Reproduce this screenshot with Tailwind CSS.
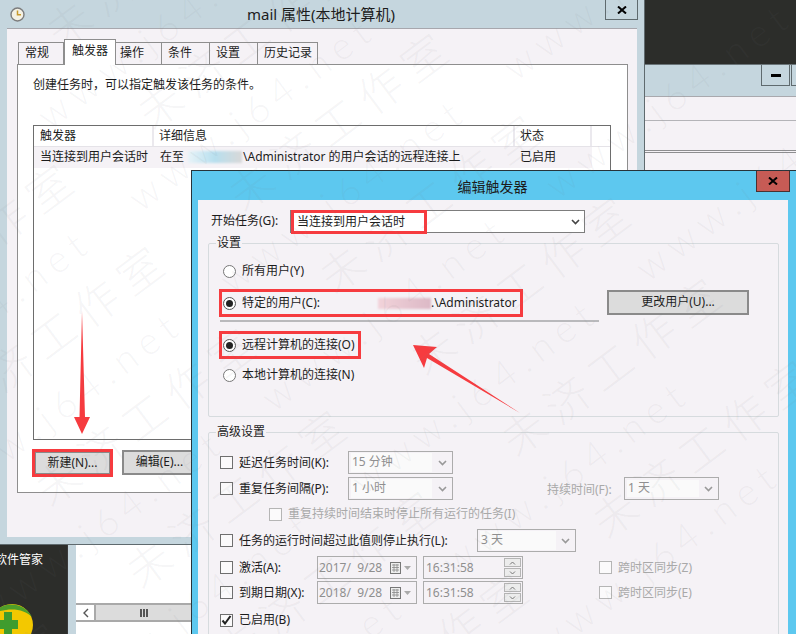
<!DOCTYPE html>
<html lang="zh-CN">
<head>
<meta charset="utf-8">
<script src="https://cdn.jsdelivr.net/npm/@tailwindcss/browser@4"></script>
</head>
<body class="m-0">
<div class="relative w-[796px] h-[634px] overflow-hidden bg-[#c5d6de] text-[12px] leading-[16px] text-[#1c1c1c] font-['Noto_Sans','Noto_Sans_CJK_SC',sans-serif]">

  <!-- other windows at right -->
  <div class="absolute left-[645px] top-0 w-[151px] h-[170px] flex flex-col">
    <div class="h-[65px] bg-[#2c2d2a] border-b border-[#6a7478]"></div>
    <div class="h-[31px] flex items-start justify-end pl-[116px] gap-[1px]">
      <div class="w-[29px] h-[21px] border border-t-0 border-[#5f6a6e] flex items-center justify-center"><div class="w-[10px] h-[3px] bg-black"></div></div>
      <div class="flex-1 h-[21px] border-l border-b border-[#5f6a6e]"></div>
    </div>
    <div class="h-[24px] bg-[#f5f2f6] border-t border-[#a9a9ae]"></div>
    <div class="h-[30px] bg-[#f5f2f6] border-t border-[#b4b4b8]"></div>
    <div class="flex-1 bg-[#f5f2f6] border-t-[3px] border-double border-[#8e8e90]"></div>
  </div>

  <!-- lower-left windows -->
  <div class="absolute left-0 top-[544px] w-[192px] h-[90px] flex border-t border-[#5f6a6e]">
    <div class="relative w-[68px] bg-[#2c2d2a] text-white overflow-hidden border-r border-[#3a3a3a]">
      <div class="ml-[-5px] mt-[7px] whitespace-nowrap">软件管家</div>
      <svg class="absolute left-0 top-[58px]" width="40" height="32" viewBox="0 0 40 32">
        <circle cx="12" cy="22" r="21" fill="#f3c800"/>
        <path d="M-6 10 C2 -2 24 -2 32 14 C24 6 10 4 -6 10Z" fill="#4f9f2a"/>
        <path d="M4 9h8v8h6v9h-6v8h-8v-8h-6v-9h6z" fill="#3f9c2e"/>
      </svg>
    </div>
    <div class="w-[8px] bg-[#c5d6de]"></div>
    <div class="flex-1 bg-white flex flex-col">
      <div class="h-[58px]"></div>
      <div class="h-[19px] flex items-stretch border-t-2 border-b-2 border-[#a9a9a9]">
        <div class="w-[18px] flex items-center justify-center">
          <svg width="7" height="10" viewBox="0 0 7 10"><path d="M6 1L2 5l4 4" fill="none" stroke="#555" stroke-width="1.4"/></svg>
        </div>
        <div class="flex-1 bg-[#dcdcdc] border-l-2 border-[#a9a9a9] flex items-center justify-center gap-[1px]">
          <i class="w-[2px] h-[8px] bg-[#555]"></i><i class="w-[2px] h-[8px] bg-[#555]"></i><i class="w-[2px] h-[8px] bg-[#555]"></i>
        </div>
      </div>
    </div>
  </div>

  <!-- mail properties window -->
  <div class="absolute left-0 top-0 w-[645px] h-[545px] bg-[#c5d6de] border-r border-b border-[#5f6a6e] flex flex-col">
    <div class="relative h-[28px] flex items-center justify-center shrink-0">
      <svg class="absolute left-[10px] top-[7px]" width="15" height="15" viewBox="0 0 15 15">
        <circle cx="7.5" cy="7.5" r="6.5" fill="#f4f1e4" stroke="#7d7d7d" stroke-width="1.4"/>
        <path d="M7.5 3.5v4.2h3.5" fill="none" stroke="#c79a2c" stroke-width="1.5"/>
      </svg>
      <span class="text-[15px] leading-[20px] ml-[-2px] mt-[-1px]">mail 属性(本地计算机)</span>
      <div class="absolute left-[605px] top-0 w-[33px] h-[20px] border border-t-0 border-[#5f6a6e] flex items-center justify-center">
        <svg width="10" height="8" viewBox="0 0 10 8"><path d="M1 0.5L9 7.5M9 0.5L1 7.5" stroke="#000" stroke-width="2"/></svg>
      </div>
    </div>
    <div class="ml-[7px] w-[630px] h-[509px] bg-[#f5f2f6] border-t border-[#a7a7ad] pl-[10px] pt-[10px]">
      <div class="flex items-end h-[25px] pl-[1px] relative z-10">
        <div class="w-[46px] h-[22px] border border-b-0 border-[#8e8e8e] pl-[6px] leading-[20px]">常规</div>
        <div class="w-[52px] h-[26px] mb-[-1px] bg-white border border-b-0 border-[#8e8e8e] pl-[7px] leading-[22px]">触发器</div>
        <div class="w-[46px] h-[22px] border border-b-0 border-l-0 border-[#8e8e8e] pl-[4px] leading-[20px]">操作</div>
        <div class="w-[48px] h-[22px] border border-b-0 border-l-0 border-[#8e8e8e] pl-[6px] leading-[20px]">条件</div>
        <div class="w-[48px] h-[22px] border border-b-0 border-l-0 border-[#8e8e8e] pl-[6px] leading-[20px]">设置</div>
        <div class="w-[60px] h-[22px] border border-b-0 border-l-0 border-[#8e8e8e] pl-[6px] leading-[20px]">历史记录</div>
      </div>
      <div class="w-[611px] h-[429px] bg-white border border-[#8e8e8e] pl-[15px] pt-[12px]">
        <div class="text-[#1c1c1c]">创建任务时，可以指定触发该任务的条件。</div>
        <div class="mt-[32px] w-[578px] h-[315px] border border-[#6d6d6d]">
          <div class="flex h-[21px] border-b border-[#e5e3e8] leading-[20px]">
            <div class="w-[120px] pl-[6px] border-r-2 border-[#ebe9ee]">触发器</div>
            <div class="w-[361px] pl-[5px] border-r-2 border-[#ebe9ee]">详细信息</div>
            <div class="w-[77px] pl-[5px] border-r-2 border-[#ebe9ee]">状态</div>
          </div>
          <div class="flex h-[21px] w-[558px] bg-[#f5f2f6] leading-[19px]">
            <div class="w-[120px] pl-[6px]">当连接到用户会话时</div>
            <div class="w-[361px] pl-[6px] flex whitespace-nowrap">在至<span class="w-[54px] h-[12px] mt-[4px] ml-[4px] bg-gradient-to-r from-[#e8f3f8] via-[#b7dfee] to-[#d8d8d8] blur-[1px]"></span><span class="ml-[1px]">\Administrator 的用户会话的远程连接上</span></div>
            <div class="w-[77px] pl-[5px]">已启用</div>
          </div>
        </div>
        <div class="flex mt-[9px] items-start">
          <div class="w-[81px] h-[28px] border-[3px] border-[#f63b3f] ml-[-1px]">
            <div class="h-full bg-[#dcdcdc] border border-[#8a8a8a] text-center leading-[19px]">新建(N)...</div>
          </div>
          <div class="w-[75px] h-[25px] ml-[9px] mt-[1px] bg-[#dcdcdc] border-2 border-[#8a8a8a] text-center leading-[20px]">编辑(E)...</div>
        </div>
      </div>
    </div>
  </div>

  <!-- edit trigger dialog -->
  <div class="absolute left-[191px] top-[170px] w-[606px] h-[464px] bg-[#5dc8ef] border-t border-l border-[#27343a] flex flex-col">
    <div class="relative h-[29px] shrink-0 flex items-center justify-center">
      <span class="text-[14px] ml-[-4px] mt-[2px]">编辑触发器</span>
      <div class="absolute left-[564px] top-0 w-[34px] h-[21px] bg-[#c75b55] border border-t-0 border-[#4a3030] flex items-center justify-center">
        <svg width="10" height="8" viewBox="0 0 10 8"><path d="M1 0.5L9 7.5M9 0.5L1 7.5" stroke="#000" stroke-width="2"/></svg>
      </div>
    </div>
    <div class="ml-[6px] w-[590px] flex-1 bg-[#f5f2f6] pl-[10px]">
      <!-- start task -->
      <div class="flex items-start mt-[10px] h-[23px]">
        <div class="w-[82px] pl-[3px] mt-[3px]">开始任务(G):</div>
        <div class="relative w-[295px] h-[23px] bg-white border border-[#7d7d7d] flex items-center justify-end pr-[4px]">
          <svg width="9" height="6" viewBox="0 0 9 6"><path d="M1 1l3.5 3.5L8 1" fill="none" stroke="#444" stroke-width="1.6"/></svg>
          <div class="absolute left-0 top-[-1px] w-[136px] h-[24px] border-[3px] border-[#f63b3f] pl-[3px] leading-[16px] pt-[1px]">当连接到用户会话时</div>
        </div>
      </div>
      <!-- settings group -->
      <fieldset class="mt-[2px] w-[571px] h-[182px] border border-[#d6dbde] rounded-[2px] pl-[10px] min-w-0">
        <legend class="ml-[-3px] px-[1px] leading-[16px]">设置</legend>
        <div class="flex items-center h-[20px] mt-[10px] ml-[4px]">
          <span class="w-[13px] h-[13px] rounded-full border border-[#777] bg-white"></span>
          <span class="ml-[6px]">所有用户(Y)</span>
        </div>
        <div class="flex items-start mt-[8px]">
          <div class="w-[304px] h-[28px] border-[3px] border-[#f63b3f] flex items-center pl-[1px] whitespace-nowrap">
            <span class="w-[13px] h-[13px] rounded-full border border-[#555] bg-white flex items-center justify-center"><i class="w-[7px] h-[7px] rounded-full bg-[#222]"></i></span>
            <span class="ml-[6px] w-[136px]">特定的用户(C):</span>
            <span class="w-[53px] h-[11px] bg-gradient-to-r from-[#f2d3da] to-[#dcb9c6] blur-[1px]"></span>
            <span>.\Administrator</span>
          </div>
          <div class="w-[142px] h-[25px] ml-[84px] mt-[1px] bg-[#dcdcdc] border-2 border-[#8a8a8a] text-center leading-[20px]">更改用户(U)...</div>
        </div>
        <div class="w-[379px] h-[2px] bg-[#b9b9bc] ml-[1px] mt-[3px]"></div>
        <div class="w-[142px] h-[28px] mt-[9px] border-[3px] border-[#f63b3f] flex items-center pl-[1px] whitespace-nowrap">
          <span class="w-[13px] h-[13px] rounded-full border border-[#555] bg-white flex items-center justify-center"><i class="w-[7px] h-[7px] rounded-full bg-[#222]"></i></span>
          <span class="ml-[6px]">远程计算机的连接(O)</span>
        </div>
        <div class="flex items-center h-[20px] mt-[6px] ml-[4px]">
          <span class="w-[13px] h-[13px] rounded-full border border-[#777] bg-white"></span>
          <span class="ml-[6px]">本地计算机的连接(N)</span>
        </div>
      </fieldset>
      <!-- advanced group -->
      <fieldset class="mt-[7px] w-[571px] h-[260px] border border-[#d6dbde] rounded-[2px] pl-[11px] min-w-0">
        <legend class="ml-[-4px] px-[1px] leading-[16px]">高级设置</legend>
        <div class="flex items-center h-[23px] mt-[11px]">
          <span class="w-[13px] h-[13px] border border-[#6f6f6f] bg-[#fbfafb]"></span>
          <span class="ml-[6px] w-[109px]">延迟任务时间(K):</span>
          <div class="w-[105px] h-[23px] border border-[#acacac] flex items-center pl-[2px] pr-[5px] text-[#8f8f8f]"><span class="w-[81px] h-[19px] bg-[#fafafa] pl-[1px] leading-[18px]">15 分钟</span><svg class="ml-auto" width="9" height="6" viewBox="0 0 9 6"><path d="M1 1l3.5 3.5L8 1" fill="none" stroke="#999" stroke-width="1.6"/></svg></div>
        </div>
        <div class="flex items-center h-[23px] mt-[3px]">
          <span class="w-[13px] h-[13px] border border-[#6f6f6f] bg-[#fbfafb]"></span>
          <span class="ml-[6px] w-[109px]">重复任务间隔(P):</span>
          <div class="w-[105px] h-[23px] border border-[#acacac] flex items-center pl-[2px] pr-[5px] text-[#8f8f8f]"><span class="w-[81px] h-[19px] bg-[#fafafa] pl-[1px] leading-[18px]">1 小时</span><svg class="ml-auto" width="9" height="6" viewBox="0 0 9 6"><path d="M1 1l3.5 3.5L8 1" fill="none" stroke="#999" stroke-width="1.6"/></svg></div>
          <span class="ml-[94px] w-[77px] text-[#a9a9a9] mt-[2px]">持续时间(F):</span>
          <div class="w-[95px] h-[23px] border border-[#acacac] flex items-center pl-[2px] pr-[5px] text-[#8f8f8f]"><span class="w-[72px] h-[17px] bg-[#fafafa] pl-[1px] leading-[15px]">1 天</span><svg class="ml-auto" width="9" height="6" viewBox="0 0 9 6"><path d="M1 1l3.5 3.5L8 1" fill="none" stroke="#999" stroke-width="1.6"/></svg></div>
        </div>
        <div class="flex items-center h-[18px] mt-[5px] pl-[49px] text-[#a9a9a9]">
          <span class="w-[13px] h-[13px] border border-[#b5b5b5] bg-[#fbfafb]"></span>
          <span class="ml-[6px]">重复持续时间结束时停止所有运行的任务(I)</span>
        </div>
        <div class="flex items-center h-[23px] mt-[6px]">
          <span class="w-[13px] h-[13px] border border-[#6f6f6f] bg-[#fbfafb]"></span>
          <span class="ml-[6px] w-[238px]">任务的运行时间超过此值则停止执行(L):</span>
          <div class="w-[99px] h-[23px] border border-[#acacac] flex items-center pl-[2px] pr-[5px] text-[#8f8f8f]"><span class="w-[76px] h-[19px] bg-[#fafafa] pl-[1px] leading-[18px]">3 天</span><svg class="ml-auto" width="9" height="6" viewBox="0 0 9 6"><path d="M1 1l3.5 3.5L8 1" fill="none" stroke="#999" stroke-width="1.6"/></svg></div>
        </div>
        <div class="flex items-center h-[23px] mt-[4px]">
          <span class="w-[13px] h-[13px] border border-[#6f6f6f] bg-[#fbfafb]"></span>
          <span class="ml-[6px] w-[78px]">激活(A):</span>
          <div class="w-[100px] h-[23px] border border-[#acacac] flex items-center pl-[1px] text-[#8f8f8f] whitespace-pre">2017/  9/28<svg class="ml-[8px]" width="24" height="12" viewBox="0 0 24 12"><rect x="0.5" y="0.5" width="10" height="11" fill="#eee" stroke="#777"/><path d="M2 3h7M2 5.500h7M2 8h7M4 2v8M7 2v8" stroke="#888" stroke-width="0.8"/><path d="M14 4h7l-3.500 4z" fill="#aaa"/></svg></div>
          <div class="w-[100px] h-[23px] ml-[6px] border border-[#acacac] flex items-center justify-between pl-[2px] pr-[1px] text-[#8f8f8f]">16:31:58
            <div class="flex flex-col gap-[1px]"><div class="w-[17px] h-[9px] border border-[#b5b5b5] bg-[#ececec] flex items-center justify-center"><svg width="7" height="4" viewBox="0 0 7 4"><path d="M1 3.500l2.500-2.500L6 3.500" fill="none" stroke="#777"/></svg></div><div class="w-[17px] h-[9px] border border-[#b5b5b5] bg-[#ececec] flex items-center justify-center"><svg width="7" height="4" viewBox="0 0 7 4"><path d="M1 .5l2.500 2.500L6 .5" fill="none" stroke="#777"/></svg></div></div>
          </div>
          <span class="ml-[76px] w-[13px] h-[13px] border border-[#b5b5b5] bg-[#fbfafb]"></span>
          <span class="ml-[6px] text-[#a9a9a9]">跨时区同步(Z)</span>
        </div>
        <div class="flex items-center h-[23px] mt-[2px]">
          <span class="w-[13px] h-[13px] border border-[#6f6f6f] bg-[#fbfafb]"></span>
          <span class="ml-[6px] w-[78px]">到期日期(X):</span>
          <div class="w-[100px] h-[23px] border border-[#acacac] flex items-center pl-[1px] text-[#8f8f8f] whitespace-pre">2018/  9/28<svg class="ml-[8px]" width="24" height="12" viewBox="0 0 24 12"><rect x="0.5" y="0.5" width="10" height="11" fill="#eee" stroke="#777"/><path d="M2 3h7M2 5.500h7M2 8h7M4 2v8M7 2v8" stroke="#888" stroke-width="0.8"/><path d="M14 4h7l-3.500 4z" fill="#aaa"/></svg></div>
          <div class="w-[100px] h-[23px] ml-[6px] border border-[#acacac] flex items-center justify-between pl-[2px] pr-[1px] text-[#8f8f8f]">16:31:58
            <div class="flex flex-col gap-[1px]"><div class="w-[17px] h-[9px] border border-[#b5b5b5] bg-[#ececec] flex items-center justify-center"><svg width="7" height="4" viewBox="0 0 7 4"><path d="M1 3.500l2.500-2.500L6 3.500" fill="none" stroke="#777"/></svg></div><div class="w-[17px] h-[9px] border border-[#b5b5b5] bg-[#ececec] flex items-center justify-center"><svg width="7" height="4" viewBox="0 0 7 4"><path d="M1 .5l2.500 2.500L6 .5" fill="none" stroke="#777"/></svg></div></div>
          </div>
          <span class="ml-[76px] w-[13px] h-[13px] border border-[#b5b5b5] bg-[#fbfafb]"></span>
          <span class="ml-[6px] text-[#a9a9a9]">跨时区同步(E)</span>
        </div>
        <div class="flex items-center h-[20px] mt-[6px]">
          <span class="w-[13px] h-[13px] border border-[#6f6f6f] bg-[#fbfafb] flex items-center justify-center"><svg width="11" height="10" viewBox="0 0 11 10"><path d="M1.500 5.500l2.500 3L9.500 1" fill="none" stroke="#222" stroke-width="2"/></svg></span>
          <span class="ml-[6px]">已启用(B)</span>
        </div>
      </fieldset>
    </div>
  </div>

  <!-- annotation arrows -->
  <svg class="absolute left-0 top-0 pointer-events-none" width="796" height="634" viewBox="0 0 796 634">
    <path d="M82 311L85 417L90 417L82 434L74 417L79.500 417Z" fill="#f63b3f"/>
    <path d="M520 413L429 354L437 347L413 345L424 368L427 358Z" fill="#f63b3f"/>
  </svg>

  <!-- watermark -->
  <div class="absolute inset-0 pointer-events-none overflow-hidden text-[38px] leading-[44px] font-light text-[#777b80]/7 whitespace-nowrap font-['Lato','Noto_Sans_CJK_SC',sans-serif]">
    <div class="absolute left-[-243px] top-[310px] origin-left rotate-[-36.87deg] flex tracking-[8px]"><span class="w-[355px]">www.j64.net</span><span class="w-[355px]">www.j64.net</span><span class="w-[355px]">www.j64.net</span></div>
    <div class="absolute left-[-152px] top-[392px] origin-left rotate-[-36.87deg] flex tracking-[8px]"><span class="w-[355px]">www.j64.net</span><span class="w-[355px]">www.j64.net</span><span class="w-[355px]">www.j64.net</span></div>
    <div class="absolute left-[-61px] top-[474px] origin-left rotate-[-36.87deg] flex tracking-[8px]"><span class="w-[355px]">www.j64.net</span><span class="w-[355px]">www.j64.net</span><span class="w-[355px]">www.j64.net</span></div>
    <div class="absolute left-[-19px] top-[592px] origin-left rotate-[-36.87deg] flex tracking-[8px]"><span class="w-[355px]">www.j64.net</span><span class="w-[355px]">www.j64.net</span><span class="w-[355px]">www.j64.net</span></div>
    <div class="absolute left-[71px] top-[675px] origin-left rotate-[-36.87deg] flex tracking-[8px]"><span class="w-[355px]">www.j64.net</span><span class="w-[355px]">www.j64.net</span><span class="w-[355px]">www.j64.net</span></div>
    <div class="absolute left-[162px] top-[756px] origin-left rotate-[-36.87deg] flex tracking-[8px]"><span class="w-[355px]">www.j64.net</span><span class="w-[355px]">www.j64.net</span></div>
    <div class="absolute left-[253px] top-[838px] origin-left rotate-[-36.87deg] flex tracking-[8px]"><span class="w-[355px]">www.j64.net</span><span class="w-[355px]">www.j64.net</span></div>
    <div class="absolute left-[-233px] top-[228px] origin-left rotate-[-36.87deg] flex tracking-[10px] text-[44px]"><span class="w-[355px]">未济工作室</span><span class="w-[355px]">未济工作室</span></div>
    <div class="absolute left-[-142px] top-[309px] origin-left rotate-[-36.87deg] flex tracking-[10px] text-[44px]"><span class="w-[355px]">未济工作室</span><span class="w-[355px]">未济工作室</span><span class="w-[355px]">未济工作室</span></div>
    <div class="absolute left-[-51px] top-[391px] origin-left rotate-[-36.87deg] flex tracking-[10px] text-[44px]"><span class="w-[355px]">未济工作室</span><span class="w-[355px]">未济工作室</span><span class="w-[355px]">未济工作室</span></div>
    <div class="absolute left-[-244px] top-[686px] origin-left rotate-[-36.87deg] flex tracking-[10px] text-[44px]"><span class="w-[355px]">未济工作室</span><span class="w-[355px]">未济工作室</span><span class="w-[355px]">未济工作室</span></div>
    <div class="absolute left-[-153px] top-[768px] origin-left rotate-[-36.87deg] flex tracking-[10px] text-[44px]"><span class="w-[355px]">未济工作室</span><span class="w-[355px]">未济工作室</span><span class="w-[355px]">未济工作室</span></div>
    <div class="absolute left-[-62px] top-[849px] origin-left rotate-[-36.87deg] flex tracking-[10px] text-[44px]"><span class="w-[355px]">未济工作室</span><span class="w-[355px]">未济工作室</span><span class="w-[355px]">未济工作室</span></div>
    <div class="absolute left-[29px] top-[931px] origin-left rotate-[-36.87deg] flex tracking-[10px] text-[44px]"><span class="w-[355px]">未济工作室</span><span class="w-[355px]">未济工作室</span><span class="w-[355px]">未济工作室</span></div>
  </div>
</div>
</body>
</html>
